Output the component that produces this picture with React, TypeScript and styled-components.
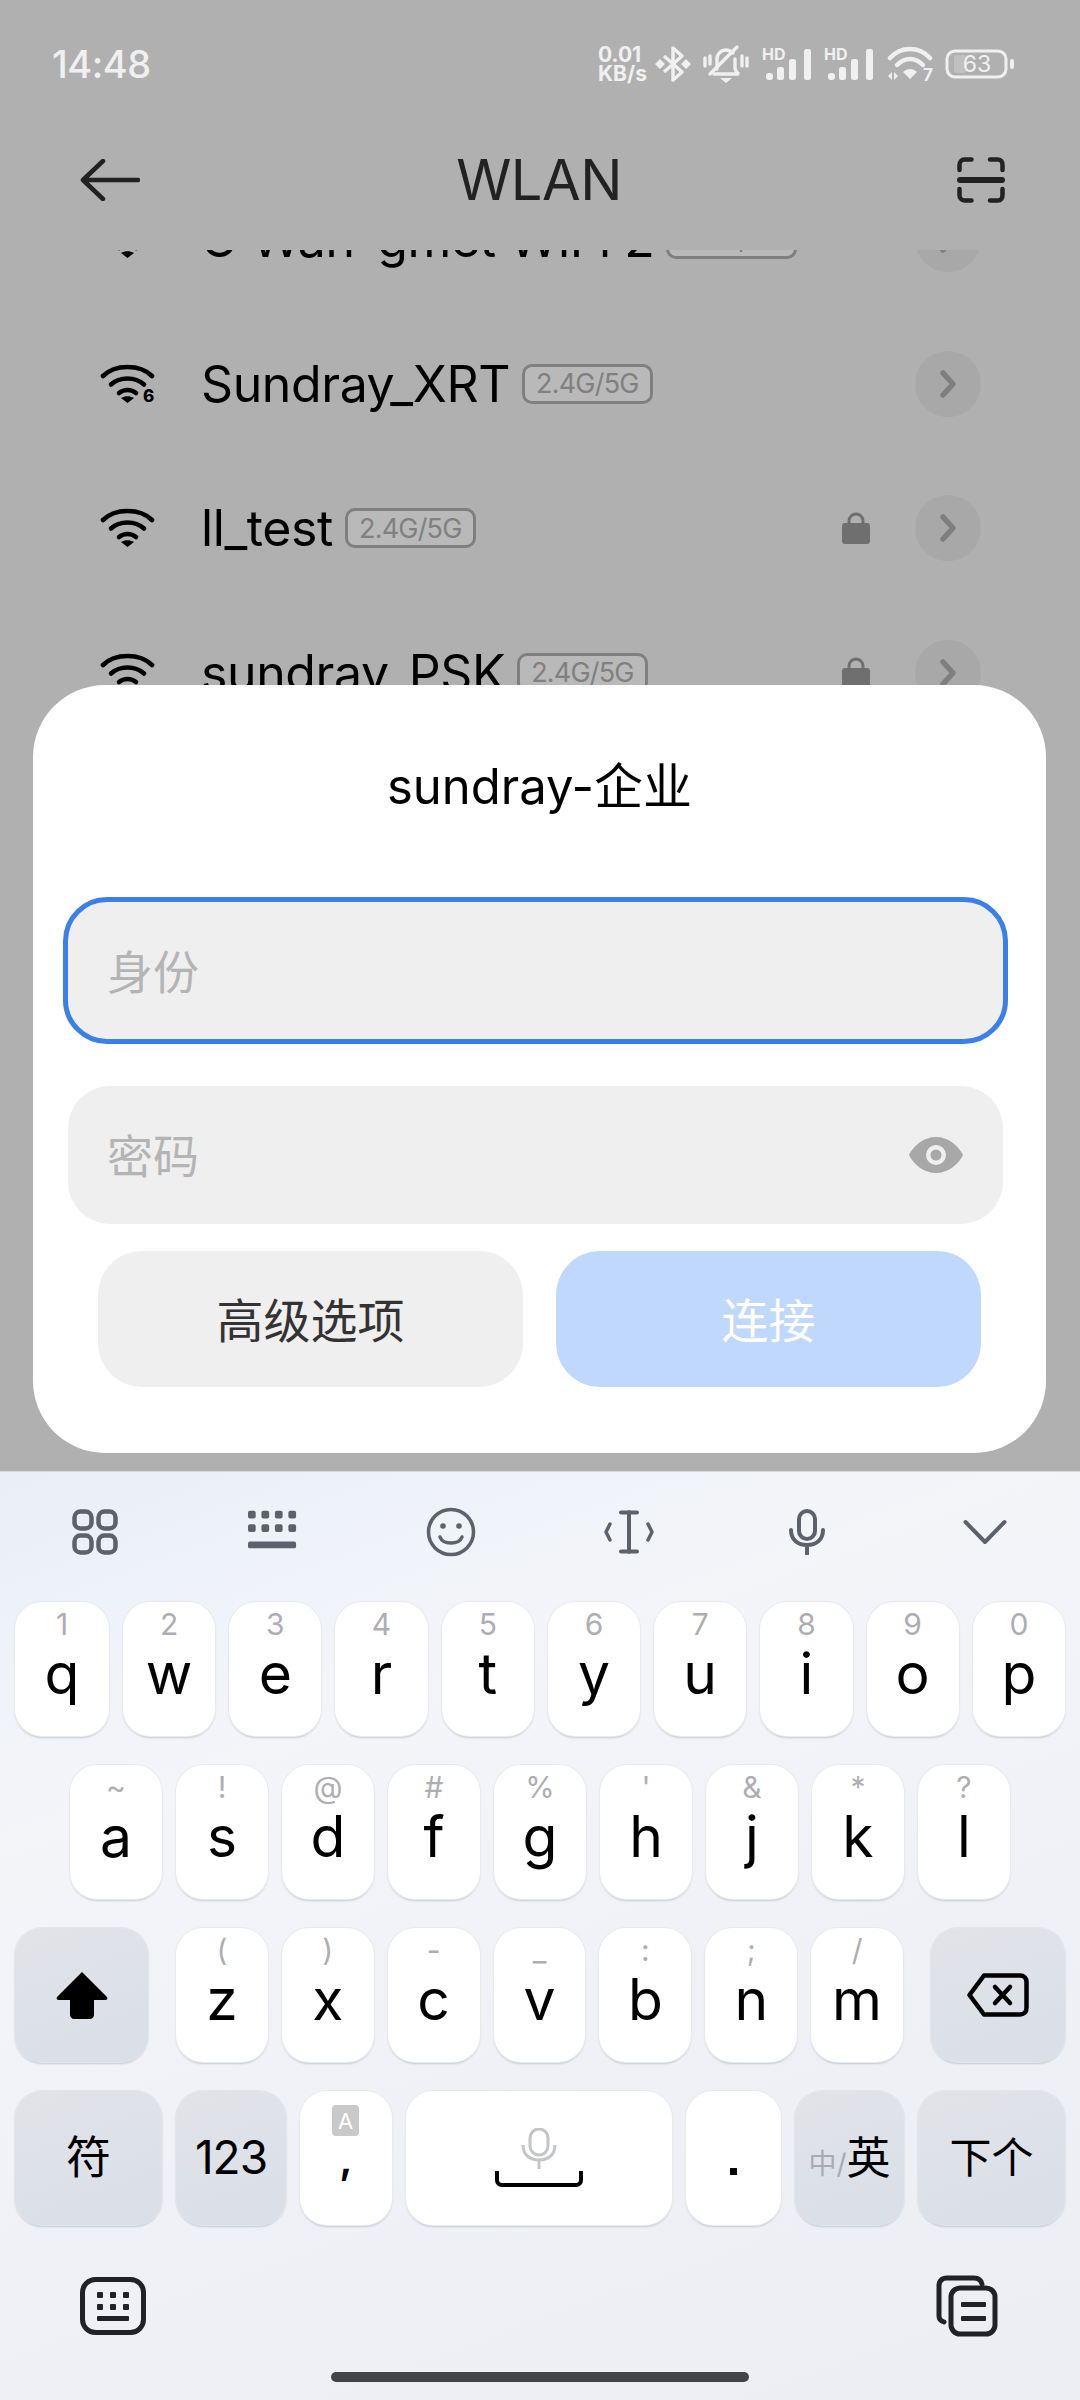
import React from 'react';
import styled, { createGlobalStyle } from 'styled-components';

const FONT = `Inter, "Noto Sans CJK SC", "Noto Sans", sans-serif`;

const GlobalStyle = createGlobalStyle`
  html, body {
    margin: 0;
    padding: 0;
    background: #eceef3;
  }
  * {
    box-sizing: border-box;
  }
`;

const Page = styled.div`
  width: 1080px;
  height: 2400px;
  display: flex;
  flex-direction: column;
  overflow: hidden;
  font-family: ${FONT};
`;

/* dimmed settings page behind the dialog */
const Backdrop = styled.div`
  position: relative;
  height: 1471px;
  flex: none;
  display: flex;
  flex-direction: column;
  background: #b0b0b0;
`;

const StatusBar = styled.div`
  height: 120px;
  flex: none;
  padding: 8px 65px 0 52px;
  display: flex;
  align-items: center;
  justify-content: space-between;
  color: #f0f0f0;
`;

const Clock = styled.div`
  font-size: 38px;
  font-weight: 500;
  letter-spacing: -0.5px;
`;

const StatusIcons = styled.div`
  display: flex;
  align-items: center;
  gap: 12.5px;
`;

const NetSpeed = styled.div`
  width: 50px;
  margin-right: -6px;
  font-size: 21px;
  line-height: 19px;
  font-weight: 700;
  text-align: left;
`;

const Header = styled.div`
  height: 130px;
  flex: none;
  padding: 0 75px 10px 73px;
  display: grid;
  grid-template-columns: 1fr auto 1fr;
  align-items: center;
  color: #222;
`;

const HeaderStart = styled.div`
  padding-left: 7px;
  display: flex;
`;

const HeaderEnd = styled.div`
  justify-self: end;
  display: flex;
`;

const Title = styled.div`
  font-size: 56px;
  font-weight: 400;
  letter-spacing: -0.5px;
`;

const List = styled.div`
  flex: 1;
  overflow: hidden;
`;

const ListInner = styled.div`
  margin-top: -83px;
`;

const NetworkRow = styled.div`
  height: 144.5px;
  padding: 0 99px 0 100px;
  display: flex;
  align-items: center;
`;

const NetworkName = styled.div`
  margin-left: 46px;
  font-size: 50px;
  color: #000;
  letter-spacing: -0.4px;
`;

const BandTag = styled.div`
  margin-left: 12px;
  height: 40px;
  padding: 0 11px;
  display: flex;
  align-items: center;
  border: 3px solid #7f7f7f;
  border-radius: 10px;
  background: #b9b9b9;
  color: #808080;
  font-size: 27px;
  letter-spacing: -0.8px;
`;

const RowEnd = styled.div`
  margin-left: auto;
  display: flex;
  align-items: center;
  gap: 45px;
`;

const ChevronCircle = styled.div`
  width: 66px;
  height: 66px;
  border-radius: 50%;
  background: #a8a8a8;
  display: flex;
  align-items: center;
  justify-content: center;
`;

const Dialog = styled.div`
  position: absolute;
  left: 33px;
  right: 34px;
  top: 685px;
  bottom: 18px;
  border-radius: 72px;
  background: #fff;
  display: flex;
  flex-direction: column;
`;

const DialogTitle = styled.div`
  height: 194px;
  margin-bottom: 18px;
  display: flex;
  align-items: center;
  justify-content: center;
  font-size: 49px;
  color: #000;
`;

const FocusedField = styled.div`
  height: 147px;
  margin: 0 38px 0 30px;
  padding-left: 39px;
  display: flex;
  align-items: center;
  border: 5px solid #3b7fe8;
  border-radius: 44px;
  background: #efefef;
`;

const PasswordField = styled.div`
  height: 138px;
  margin: 42px 43px 0 35px;
  padding: 0 40px 0 39px;
  display: flex;
  align-items: center;
  justify-content: space-between;
  border-radius: 42px;
  background: #efefef;
`;

const Placeholder = styled.div`
  padding-bottom: 4px;
  font-size: 46px;
  color: #b4b4b4;
`;

const DialogActions = styled.div`
  margin: 27px 65px 0 65px;
  display: grid;
  grid-template-columns: 1fr 1fr;
  gap: 33px;
`;

const ActionButton = styled.div<{ $primary?: boolean }>`
  height: 136px;
  padding-bottom: 4px;
  border-radius: 44px;
  display: flex;
  align-items: center;
  justify-content: center;
  font-size: 47px;
  background: ${(p) => (p.$primary ? '#c0d8fc' : '#efefef')};
  color: ${(p) => (p.$primary ? '#fff' : '#333')};
`;

const Keyboard = styled.div`
  flex: 1;
  border-top: 1px solid #d9dadc;
  background: linear-gradient(160deg, #e9eff8 0%, #f4f5f9 28%, #eff1f6 60%, #eceef3 100%);
  display: flex;
  flex-direction: column;
`;

const Toolbar = styled.div`
  height: 130px;
  flex: none;
  padding: 0 70px 11px;
  display: flex;
  align-items: center;
  justify-content: space-between;
`;

const ToolSlot = styled.div`
  width: 50px;
  height: 50px;
  display: flex;
  align-items: center;
  justify-content: center;
`;

const KeyRow = styled.div<{ $inset: number }>`
  height: 134px;
  flex: none;
  padding: 0 ${(p) => p.$inset}px;
  margin-bottom: 29px;
  display: flex;
  gap: 14px;
`;

const Key = styled.div<{ $dark?: boolean; $width?: number }>`
  ${(p) => (p.$width ? `width: ${p.$width}px; flex: none;` : 'flex: 1;')}
  height: 134px;
  position: relative;
  display: flex;
  flex-direction: column;
  align-items: center;
  justify-content: center;
  border-radius: 27px;
  color: #000;
  background: ${(p) => (p.$dark ? 'linear-gradient(160deg, #e2e3e8, #d9dfe8)' : '#fff')};
  box-shadow: 0 0 0 1px ${(p) => (p.$dark ? '#e3e5ea' : '#e8eaee')}, 0 2px 2px rgba(70, 80, 100, 0.24);
`;

const LetterKey = styled(Key)`
  justify-content: flex-start;
`;

const ShiftKey = styled(Key)`
  margin-right: 14px;
`;

const BackspaceKey = styled(Key)`
  margin-left: 14px;
`;

const Hint = styled.div`
  height: 40px;
  padding-top: 7px;
  font-size: 30px;
  line-height: 30px;
  color: #aeaeb2;
`;

const Letter = styled.div`
  height: 64px;
  font-size: 57px;
  line-height: 64px;
`;

const KeyLabel = styled.div<{ $size: number }>`
  font-size: ${(p) => p.$size}px;
  line-height: 1.2;
  letter-spacing: ${(p) => (p.$size > 45 ? -1 : 0)}px;
`;

const SmallGray = styled.span`
  font-size: 28px;
  color: #a9abb0;
`;

const AltBadge = styled.div`
  position: absolute;
  top: 14px;
  left: 32px;
  width: 27px;
  height: 31px;
  border-radius: 4px;
  background: #c9c9c9;
  color: #fff;
  font-size: 22px;
  display: flex;
  align-items: center;
  justify-content: center;
`;

const Comma = styled.div`
  margin-top: 46px;
  font-size: 42px;
  font-weight: 600;
  line-height: 42px;
`;

const Period = styled.div`
  width: 7px;
  height: 7px;
  margin-top: 77px;
  background: #000;
`;

const BottomBar = styled.div`
  margin-top: 21px;
  height: 62px;
  flex: none;
  padding: 0 82px 0 80px;
  display: flex;
  align-items: center;
  justify-content: space-between;
`;

const HomeIndicator = styled.div`
  width: 418px;
  height: 10px;
  margin: 35px auto 0;
  flex: none;
  border-radius: 5px;
  background: #424448;
`;

const SignalIcon = () => (
  <svg width="50" height="38" viewBox="0 -2 50 38">
    <text x="0" y="13" fontSize="16" fontWeight="700" fill="#f0f0f0" fontFamily="Inter, sans-serif">HD</text>
    <g fill="#f0f0f0">
      <rect x="4" y="26" width="7" height="7" rx="3" />
      <rect x="15" y="20" width="7" height="13" rx="2.500" />
      <rect x="27" y="12" width="7" height="21" rx="2.500" />
      <rect x="42" y="2" width="7" height="31" rx="2.500" />
    </g>
  </svg>
);

const BluetoothIcon = () => (
  <svg width="36" height="38" viewBox="0 0 36 38">
    <path d="M9 11l18 16-9 8V3l9 8L9 27" fill="none" stroke="#f0f0f0" strokeWidth="3.5" strokeLinejoin="round" />
    <path d="M5 14l5 5-5 5-5-5zM31 14l5 5-5 5-5-5z" fill="#f0f0f0" />
  </svg>
);

const MutedBellIcon = () => (
  <svg width="46" height="40" viewBox="0 0 46 40">
    <g fill="none" stroke="#f0f0f0" strokeWidth="3.4" strokeLinecap="round">
      <path d="M14 25V15c0-5 4-9 9-9 3 0 5 1 7 3" />
      <path d="M32 15v9c0 2 2 5 4 6H11" />
      <path d="M34 3L7 30" />
      <path d="M2 14v8M7 12v8M39 12v10M44 14v8" />
    </g>
    <path d="M17 34h12l-6 5z" fill="#f0f0f0" />
  </svg>
);

const StatusWifiIcon = () => (
  <svg width="46" height="44" viewBox="0 -4 46 44">
    <g fill="none" stroke="#f0f0f0" strokeWidth="4.500" strokeLinecap="round">
      <path d="M3 12C14 0 32 0 43 12" />
      <path d="M10 19c8-8 18-8 26 0" />
    </g>
    <path d="M23 33l-7-7c4-4 10-4 14 0z" fill="#f0f0f0" />
    <path d="M1 30l4-4v8zM7 26l4 4-4 4z" fill="#f0f0f0" />
    <text x="36" y="35" fontSize="17" fontWeight="700" fill="#f0f0f0" fontFamily="Inter, sans-serif">7</text>
  </svg>
);

const BatteryIcon = () => (
  <svg width="70" height="30" viewBox="0 0 70 30">
    <rect x="9" y="6" width="12" height="18" rx="2" fill="#c0c0c0" />
    <rect x="2" y="2" width="59" height="26" rx="8" fill="none" stroke="#f0f0f0" strokeWidth="3" />
    <rect x="65" y="10" width="4" height="10" rx="2" fill="#f0f0f0" />
    <text x="32" y="23" textAnchor="middle" fontSize="23" fill="#f0f0f0" fontFamily="Inter, sans-serif">63</text>
  </svg>
);

const BackIcon = () => (
  <svg width="60" height="42" viewBox="0 0 60 42">
    <path d="M58 21H5M23 2L3 21l20 19" fill="none" stroke="#222" strokeWidth="4.5" strokeLinecap="round" strokeLinejoin="round" />
  </svg>
);

const ScanIcon = () => (
  <svg width="48" height="46" viewBox="0 0 48 46">
    <g fill="none" stroke="#222" strokeWidth="4.5" strokeLinecap="round">
      <path d="M2.5 13V8c0-3 2-5.500 5-5.500h7M33 2.500h8c3 0 4.500 2.500 4.500 5.500v5" />
      <path d="M2.500 32v6c0 3 2 5.500 5 5.500h7M33 43.500h8c3 0 4.500-2.500 4.500-5.500v-6" />
    </g>
    <rect x="0" y="20" width="48" height="6" rx="3" fill="#222" />
  </svg>
);

const NetworkWifiIcon = ({ six }: { six?: boolean }) => (
  <svg width="55" height="46" viewBox="0 -4 55 46">
    <g fill="none" stroke="#000" strokeWidth="4.6" strokeLinecap="round">
      <path d="M3 11C15-1 40-1 52 11" />
      <path d="M11 19.500c9-8 24-8 33 0" />
      <path d="M19 28c5-4 12-4 17 0" />
    </g>
    <path d="M27.500 38l-6.500-5c4-2.500 9-2.500 13 0z" fill="#000" />
    {six && (
      <text x="43" y="37" fontSize="17" fontWeight="800" fill="#000" fontFamily="Inter, sans-serif">6</text>
    )}
  </svg>
);

const LockIcon = () => (
  <svg width="28" height="32" viewBox="0 0 28 32">
    <path d="M7 13V9a7 7 0 0 1 14 0v4" fill="none" stroke="#6f6f6f" strokeWidth="3" />
    <rect x="0" y="11" width="28" height="21" rx="3" fill="#6f6f6f" />
  </svg>
);

const ChevronIcon = () => (
  <svg width="18" height="30" viewBox="0 0 18 30">
    <path d="M4 4l10 11L4 26" fill="none" stroke="#7f7f7f" strokeWidth="5.500" strokeLinecap="round" strokeLinejoin="round" />
  </svg>
);

const EyeIcon = () => (
  <svg width="54" height="36" viewBox="0 0 54 36">
    <path
      fillRule="evenodd"
      fill="#a8a8a8"
      d="M27 0c12 0 22 8 27 18-5 10-15 18-27 18S5 28 0 18C5 8 15 0 27 0zm0 8a10 10 0 1 0 0 20 10 10 0 0 0 0-20zm0 4.500a5.500 5.500 0 1 1 0 11 5.500 5.500 0 0 1 0-11z"
    />
  </svg>
);

const TOOL = '#5d616b';

const ToolGridIcon = () => (
  <svg width="46" height="46" viewBox="0 0 46 46">
    <g fill="none" stroke={TOOL} strokeWidth="4.500">
      <rect x="2.500" y="2.500" width="17" height="17" rx="6" />
      <rect x="26.500" y="2.500" width="17" height="17" rx="6" />
      <rect x="2.500" y="26.500" width="17" height="17" rx="6" />
      <rect x="26.500" y="26.500" width="17" height="17" rx="6" />
    </g>
  </svg>
);

const ToolKeyboardIcon = () => (
  <svg width="52" height="44" viewBox="0 0 52 44">
    <g fill={TOOL}>
      {[0, 14, 28, 42].map((x) => (
        <React.Fragment key={x}>
          <rect x={x} y="0" width="8" height="8" rx="2" />
          <rect x={x} y="14" width="8" height="8" rx="2" />
        </React.Fragment>
      ))}
      <rect x="0" y="32" width="50" height="7" rx="2" />
    </g>
  </svg>
);

const ToolSmileIcon = () => (
  <svg width="50" height="50" viewBox="0 0 50 50">
    <circle cx="25" cy="25" r="22.500" fill="none" stroke={TOOL} strokeWidth="3.500" />
    <circle cx="17" cy="19" r="2.800" fill={TOOL} />
    <circle cx="33" cy="19" r="2.800" fill={TOOL} />
    <path d="M14 30c3 8 19 8 22 0" fill="none" stroke={TOOL} strokeWidth="3.500" strokeLinecap="round" />
  </svg>
);

const ToolCursorIcon = () => (
  <svg width="50" height="44" viewBox="0 0 50 44">
    <path d="M25 2v40M17 2.500h16M17 41.500h16" fill="none" stroke={TOOL} strokeWidth="4" strokeLinecap="round" />
    <path d="M6 14l-4 8 4 8M44 14l4 8-4 8" fill="none" stroke={TOOL} strokeWidth="3.500" strokeLinecap="round" strokeLinejoin="round" />
  </svg>
);

const ToolMicIcon = () => (
  <svg width="38" height="46" viewBox="0 0 38 46">
    <rect x="11" y="2" width="16" height="28" rx="8" fill="none" stroke={TOOL} strokeWidth="4" />
    <path d="M3 21c0 10 7 15 16 15s16-5 16-15M19 36v9" fill="none" stroke={TOOL} strokeWidth="4" strokeLinecap="round" />
  </svg>
);

const ToolCollapseIcon = () => (
  <svg width="44" height="26" viewBox="0 0 44 26">
    <path d="M2.500 3L22 23 41.500 3" fill="none" stroke={TOOL} strokeWidth="4" strokeLinecap="round" strokeLinejoin="round" />
  </svg>
);

const ShiftIcon = () => (
  <svg width="52" height="48" viewBox="0 0 52 48">
    <path d="M26 1L51 26c1 2 0 3-2 3H38v15c0 2-2 4-4 4H18c-2 0-4-2-4-4V29H3c-2 0-3-1-2-3z" fill="#000" />
  </svg>
);

const BackspaceIcon = () => (
  <svg width="62" height="44" viewBox="0 0 62 44">
    <path d="M17 2.500h36c4 0 6.500 2.500 6.500 6.500v26c0 4-2.500 6.500-6.500 6.500H17L2.500 22z" fill="none" stroke="#000" strokeWidth="4.500" strokeLinejoin="round" />
    <path d="M28 14l15 16M43 14L28 30" fill="none" stroke="#000" strokeWidth="4.500" strokeLinecap="round" />
  </svg>
);

const SpaceIcon = () => (
  <svg width="88" height="60" viewBox="0 0 88 60">
    <rect x="35" y="1" width="18" height="26" rx="9" fill="none" stroke="#c4c5c8" strokeWidth="3" />
    <path d="M28 17c0 10 7 15 16 15s16-5 16-15M44 32v9" fill="none" stroke="#c4c5c8" strokeWidth="3" />
    <path d="M2 43v9c0 3 2 5 5 5h74c3 0 5-2 5-5v-9" fill="none" stroke="#000" strokeWidth="4" />
  </svg>
);

const KeyboardToggleIcon = () => (
  <svg width="66" height="58" viewBox="0 0 66 58">
    <rect x="2.500" y="2.500" width="61" height="53" rx="13" fill="none" stroke="#202226" strokeWidth="5" />
    <g fill="#202226">
      {[17, 30, 43].map((x) => (
        <React.Fragment key={x}>
          <rect x={x} y="15" width="6" height="6" rx="1" />
          <rect x={x} y="27" width="6" height="6" rx="1" />
        </React.Fragment>
      ))}
      <rect x="17" y="39" width="32" height="5" rx="1" />
    </g>
  </svg>
);

const ClipboardIcon = () => (
  <svg width="62" height="62" viewBox="0 0 62 62">
    <path d="M8 47c-3-1-5-3-5-6V11c0-5 3-8 8-8h27c4 0 7 2 8 6" fill="none" stroke="#202226" strokeWidth="5" strokeLinecap="round" />
    <rect x="15" y="13" width="44" height="46" rx="9" fill="none" stroke="#202226" strokeWidth="5" />
    <rect x="25" y="27" width="25" height="5" rx="1" fill="#202226" />
    <rect x="25" y="41" width="25" height="5" rx="1" fill="#202226" />
  </svg>
);

const NETWORKS = [
  { name: 'U Wan-gmet WiFi 2', locked: false, six: false },
  { name: 'Sundray_XRT', locked: false, six: true },
  { name: 'll_test', locked: true, six: false },
  { name: 'sundray_PSK', locked: true, six: false },
];

const ROW_ONE = ['q1', 'w2', 'e3', 'r4', 't5', 'y6', 'u7', 'i8', 'o9', 'p0'];
const ROW_TWO = ['a~', 's!', 'd@', 'f#', 'g%', "h'", 'j&', 'k*', 'l?'];
const ROW_THREE = ['z(', 'x)', 'c-', 'v_', 'b:', 'n;', 'm/'];

const renderLetters = (row: string[], firstWidth?: number) =>
  row.map((k, i) => (
    <LetterKey key={k[0]} $width={i === 0 ? firstWidth : undefined}>
      <Hint>{k[1]}</Hint>
      <Letter>{k[0]}</Letter>
    </LetterKey>
  ));

export default function App() {
  return (
    <Page>
      <GlobalStyle />
      <Backdrop>
        <StatusBar>
          <Clock>14:48</Clock>
          <StatusIcons>
            <NetSpeed>
              0.01
              <br />
              KB/s
            </NetSpeed>
            <BluetoothIcon />
            <MutedBellIcon />
            <SignalIcon />
            <SignalIcon />
            <StatusWifiIcon />
            <BatteryIcon />
          </StatusIcons>
        </StatusBar>
        <Header>
          <HeaderStart>
            <BackIcon />
          </HeaderStart>
          <Title>WLAN</Title>
          <HeaderEnd>
            <ScanIcon />
          </HeaderEnd>
        </Header>
        <List>
          <ListInner>
            {NETWORKS.map((n) => (
              <NetworkRow key={n.name}>
                <NetworkWifiIcon six={n.six} />
                <NetworkName>{n.name}</NetworkName>
                <BandTag>2.4G/5G</BandTag>
                <RowEnd>
                  {n.locked && <LockIcon />}
                  <ChevronCircle>
                    <ChevronIcon />
                  </ChevronCircle>
                </RowEnd>
              </NetworkRow>
            ))}
          </ListInner>
        </List>
        <Dialog>
          <DialogTitle>sundray-企业</DialogTitle>
          <FocusedField>
            <Placeholder>身份</Placeholder>
          </FocusedField>
          <PasswordField>
            <Placeholder>密码</Placeholder>
            <EyeIcon />
          </PasswordField>
          <DialogActions>
            <ActionButton>高级选项</ActionButton>
            <ActionButton $primary>连接</ActionButton>
          </DialogActions>
        </Dialog>
      </Backdrop>
      <Keyboard>
        <Toolbar>
          <ToolSlot><ToolGridIcon /></ToolSlot>
          <ToolSlot><ToolKeyboardIcon /></ToolSlot>
          <ToolSlot><ToolSmileIcon /></ToolSlot>
          <ToolSlot><ToolCursorIcon /></ToolSlot>
          <ToolSlot><ToolMicIcon /></ToolSlot>
          <ToolSlot><ToolCollapseIcon /></ToolSlot>
        </Toolbar>
        <KeyRow $inset={15}>{renderLetters(ROW_ONE, 94)}</KeyRow>
        <KeyRow $inset={70}>{renderLetters(ROW_TWO)}</KeyRow>
        <KeyRow $inset={15}>
          <ShiftKey $dark $width={133}>
            <ShiftIcon />
          </ShiftKey>
          {renderLetters(ROW_THREE)}
          <BackspaceKey $dark $width={134}>
            <BackspaceIcon />
          </BackspaceKey>
        </KeyRow>
        <KeyRow $inset={15}>
          <Key $dark $width={147}>
            <KeyLabel $size={45}>符</KeyLabel>
          </Key>
          <Key $dark $width={110}>
            <KeyLabel $size={46}>123</KeyLabel>
          </Key>
          <LetterKey $width={92}>
            <AltBadge>A</AltBadge>
            <Comma>,</Comma>
          </LetterKey>
          <Key $width={266}>
            <SpaceIcon />
          </Key>
          <LetterKey $width={95}>
            <Period />
          </LetterKey>
          <Key $dark $width={109}>
            <KeyLabel $size={44}>
              <SmallGray>中/</SmallGray>英
            </KeyLabel>
          </Key>
          <Key $dark $width={147}>
            <KeyLabel $size={42}>下个</KeyLabel>
          </Key>
        </KeyRow>
        <BottomBar>
          <KeyboardToggleIcon />
          <ClipboardIcon />
        </BottomBar>
        <HomeIndicator />
      </Keyboard>
    </Page>
  );
}
